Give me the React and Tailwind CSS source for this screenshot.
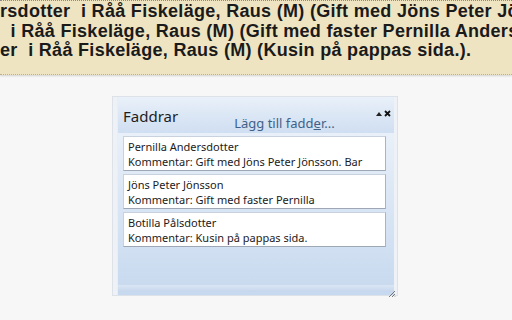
import React from "react";

function Card({ name, comment }) {
  return (
    <div className="h-[35px] bg-white border border-[#c9d1dc] border-b-[#9ea8b5] border-r-[#aab4c0] pl-[4px] pt-[2px] text-[11px] leading-[15px] text-[#1b1b1b] whitespace-nowrap overflow-hidden">
      <div>{name}</div>
      <div>{comment}</div>
    </div>
  );
}

export default function App() {
  return (
    <div className="w-[512px] h-[320px] overflow-hidden bg-[#f7f7f7] flex flex-col" style={{ fontFamily: '"Noto Sans", "DejaVu Sans", sans-serif' }}>
      <div className="h-[75px] shrink-0 bg-[#efe4c2] border-t border-dotted border-t-[#8a8a8a] border-b border-b-[#bdb08a] shadow-[0_1px_2px_rgba(0,0,0,0.15)] pt-[1px] overflow-hidden">
        <div className="font-bold text-[18px] leading-[19.5px] tracking-[0.3px] text-[#1a1a1a] whitespace-pre" style={{ fontFamily: '"Liberation Sans", Arial, sans-serif' }}>
          <div>rsdotter  i Råå Fiskeläge, Raus (M) (Gift med Jöns Peter Jönsson</div>
          <div>  i Råå Fiskeläge, Raus (M) (Gift med faster Pernilla Andersdotter</div>
          <div>er  i Råå Fiskeläge, Raus (M) (Kusin på pappas sida.).</div>
        </div>
      </div>
      <div className="ml-[112px] mt-[21px] w-[286px] h-[200px] border border-[#dde2e9] bg-[#eef2f7] flex">
        <div className="ml-[4px] mr-[3px] flex-1 flex flex-col bg-gradient-to-b from-[#f0f5fb] to-[#c7d9ef] border-l border-[#e8eef6]">
          <div className="h-[36px] shrink-0 relative bg-gradient-to-b from-[#e9f0f9] to-[#cfdef1] flex">
            <div className="pl-[5px] pt-[10px] text-[15px] leading-[18px] text-[#1e1e1e]">Faddrar</div>
            <div className="ml-[56px] pt-[18px] text-[13px] leading-[16px] text-[#3f6189]">
              Lägg till fadd<span className="underline">e</span>r...
            </div>
            <div className="absolute right-[3px] top-[13px] flex items-center gap-[2px]">
              <svg width="6" height="4" viewBox="0 0 6 4"><path d="M0 4 L3 0 L6 4 Z" fill="#222" /></svg>
              <svg width="7" height="7" viewBox="0 0 7 7"><path d="M1 1 L6 6 M6 1 L1 6" stroke="#111" strokeWidth="1.8" /></svg>
            </div>
          </div>
          <div className="pl-[5px] pr-[8px] pt-[3px] flex flex-col gap-[3px]">
            <Card name="Pernilla Andersdotter" comment="Kommentar: Gift med Jöns Peter Jönsson. Bar" />
            <Card name="Jöns Peter Jönsson" comment="Kommentar: Gift med faster Pernilla" />
            <Card name="Botilla Pålsdotter" comment="Kommentar: Kusin på pappas sida." />
          </div>
          <div className="flex-1" />
          <div className="h-[7px] shrink-0 bg-gradient-to-b from-[#dae6f4] to-[#c5d6ec] relative">
            <svg className="absolute right-[-2px] bottom-[-6px]" width="8" height="8" viewBox="0 0 8 8">
              <path d="M7 1 L1 7 M7 4 L4 7 M7 6.5 L6.5 7" stroke="#777" strokeWidth="1" />
            </svg>
          </div>
          <div className="h-[3px] shrink-0" />
        </div>
      </div>
    </div>
  );
}
